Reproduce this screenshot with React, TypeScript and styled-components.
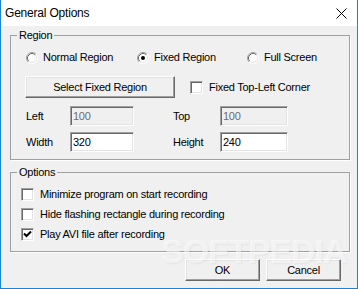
import styled, { createGlobalStyle } from 'styled-components';

const GlobalStyle = createGlobalStyle`
  html, body {
    margin: 0;
    padding: 0;
    background: #ffffff;
  }
  body {
    font-family: "Liberation Sans", Arial, sans-serif;
    font-size: 11px;
    letter-spacing: -0.25px;
    color: #000;
  }
`;

const Window = styled.div`
  position: relative;
  box-sizing: border-box;
  width: 358px;
  height: 289px;
  display: flex;
  flex-direction: column;
  border: 1px solid #1883d7;
  border-top: none;
  background: #f0f0f0;
  overflow: hidden;
`;

const TitleBar = styled.div`
  height: 26px;
  flex: none;
  display: flex;
  align-items: center;
  justify-content: space-between;
  padding: 0 10px 0 4px;
  background: #ffffff;
  font-size: 12px;
  letter-spacing: -0.2px;
  color: #000;
`;

const Body = styled.div`
  flex: 1;
  display: flex;
  flex-direction: column;
  padding: 3px 7px 0 9px;
`;

const Group = styled.fieldset<{ $gap?: number }>`
  margin: ${({ $gap }) => $gap ?? 0}px 0 0 0;
  padding: 0;
  min-width: 0;
  border: 1px solid #a0a0a0;
  box-shadow: 1px 1px 0 #ffffff;
`;

const Legend = styled.legend`
  margin-left: 6px;
  padding: 0 2px;
  line-height: 13px;
  height: 13px;
`;

const GroupInner = styled.div<{ $pad: string }>`
  display: flex;
  flex-direction: column;
  padding: ${({ $pad }) => $pad};
`;

const RadioRow = styled.div`
  display: grid;
  grid-template-columns: 111px 110px auto;
  height: 13px;
  align-items: center;
`;

const Choice = styled.label`
  display: flex;
  align-items: center;
  gap: 5px;
  white-space: nowrap;
  line-height: 13px;
`;

const ActionRow = styled.div`
  display: flex;
  align-items: center;
  gap: 15px;
  margin: 12px 0 0 -1px;
`;

const Button = styled.button<{ $w: number }>`
  box-sizing: border-box;
  width: ${({ $w }) => $w}px;
  height: 22px;
  padding: 0;
  font: inherit;
  letter-spacing: inherit;
  color: #000;
  background: #f0f0f0;
  border: 1px solid;
  border-color: #ffffff #696969 #696969 #ffffff;
  box-shadow: inset -1px -1px 0 #a0a0a0, inset 1px 1px 0 #e3e3e3;
`;

const CheckLabel = styled.label`
  display: flex;
  align-items: center;
  gap: 6px;
  white-space: nowrap;
  line-height: 13px;
`;

const Box = styled.span`
  box-sizing: border-box;
  width: 13px;
  height: 13px;
  flex: none;
  display: flex;
  align-items: center;
  justify-content: center;
  background: #ffffff;
  border: 1px solid;
  border-color: #a0a0a0 #ffffff #ffffff #a0a0a0;
  box-shadow: inset 1px 1px 0 #696969, inset -1px -1px 0 #e3e3e3;
`;

const FieldGrid = styled.div`
  display: grid;
  grid-template-columns: 44px 64px 39px 47px 68px;
  grid-auto-rows: 20px;
  row-gap: 6px;
  align-items: center;
  margin-top: 8px;
`;

const FieldLabel = styled.span`
  line-height: 13px;
`;

const TextInput = styled.input<{ $disabled?: boolean }>`
  box-sizing: border-box;
  width: 100%;
  height: 20px;
  margin: 0;
  padding: 0 2px;
  font: inherit;
  letter-spacing: inherit;
  color: ${({ $disabled }) => ($disabled ? '#6d6d6d' : '#000')};
  background: ${({ $disabled }) => ($disabled ? '#f0f0f0' : '#ffffff')};
  border: 1px solid;
  border-color: #a0a0a0 #ffffff #ffffff #a0a0a0;
  box-shadow: inset 1px 1px 0 #696969, inset -1px -1px 0 #e3e3e3;
  outline: none;
`;

const OptionList = styled.div`
  display: flex;
  flex-direction: column;
  gap: 7px;
`;

const Footer = styled.div`
  display: flex;
  justify-content: flex-end;
  gap: 6px;
  margin-top: 7px;
  padding-right: 9px;
`;

const Watermark = styled.div`
  position: absolute;
  left: 160px;
  top: 232px;
  font-family: "Liberation Sans", Arial, sans-serif;
  font-weight: bold;
  font-size: 34px;
  letter-spacing: -1px;
  color: rgba(255, 255, 255, 0.55);
  text-shadow: 1px 1px 2px rgba(0, 0, 0, 0.05);
  pointer-events: none;
`;

function RadioDot({ checked }: { checked?: boolean }) {
  return (
    <svg width="12" height="12" viewBox="0 0 12 12">
      <circle cx="6" cy="6" r="5" fill="#fff" />
      <path d="M2.11 9.89 A5.5 5.5 0 0 1 9.89 2.11" fill="none" stroke="#a0a0a0" />
      <path d="M9.89 2.11 A5.5 5.5 0 0 1 2.11 9.89" fill="none" stroke="#fff" />
      <path d="M2.82 9.18 A4.5 4.5 0 0 1 9.18 2.82" fill="none" stroke="#696969" />
      <path d="M9.18 2.82 A4.5 4.5 0 0 1 2.82 9.18" fill="none" stroke="#e3e3e3" />
      {checked && <circle cx="6" cy="6" r="2" fill="#000" />}
    </svg>
  );
}

function Check({ checked, children }: { checked?: boolean; children: string }) {
  return (
    <CheckLabel>
      <Box>
        {checked && (
          <svg width="9" height="9" viewBox="0 0 9 9">
            <path d="M1 3.5 L3.5 6 L8 1.5" fill="none" stroke="#000" strokeWidth="2" />
          </svg>
        )}
      </Box>
      {children}
    </CheckLabel>
  );
}

export default function App() {
  return (
    <Window>
      <GlobalStyle />
      <TitleBar>
        <span>General Options</span>
        <svg width="11" height="11" viewBox="0 0 11 11">
          <path d="M0.5 0.5 L10.5 10.5 M10.5 0.5 L0.5 10.5" stroke="#000" strokeWidth="1" />
        </svg>
      </TitleBar>
      <Body>
        <Group>
          <Legend>Region</Legend>
          <GroupInner $pad="9px 0 7px 15px">
            <RadioRow>
              <Choice>
                <RadioDot />
                Normal Region
              </Choice>
              <Choice>
                <RadioDot checked />
                Fixed Region
              </Choice>
              <Choice>
                <RadioDot />
                Full Screen
              </Choice>
            </RadioRow>
            <ActionRow>
              <Button $w={150}>Select Fixed Region</Button>
              <Check>Fixed Top-Left Corner</Check>
            </ActionRow>
            <FieldGrid>
              <FieldLabel>Left</FieldLabel>
              <TextInput $disabled readOnly value="100" />
              <span />
              <FieldLabel>Top</FieldLabel>
              <TextInput $disabled readOnly value="100" />
              <FieldLabel>Width</FieldLabel>
              <TextInput readOnly value="320" />
              <span />
              <FieldLabel>Height</FieldLabel>
              <TextInput readOnly value="240" />
            </FieldGrid>
          </GroupInner>
        </Group>
        <Group $gap={6}>
          <Legend>Options</Legend>
          <GroupInner $pad="9px 0 10px 10px">
            <OptionList>
              <Check>Minimize program on start recording</Check>
              <Check>Hide flashing rectangle during recording</Check>
              <Check checked>Play AVI file after recording</Check>
            </OptionList>
          </GroupInner>
        </Group>
        <Footer>
          <Button $w={75}>OK</Button>
          <Button $w={75}>Cancel</Button>
        </Footer>
      </Body>
      <Watermark>SOFTPEDIA</Watermark>
    </Window>
  );
}
